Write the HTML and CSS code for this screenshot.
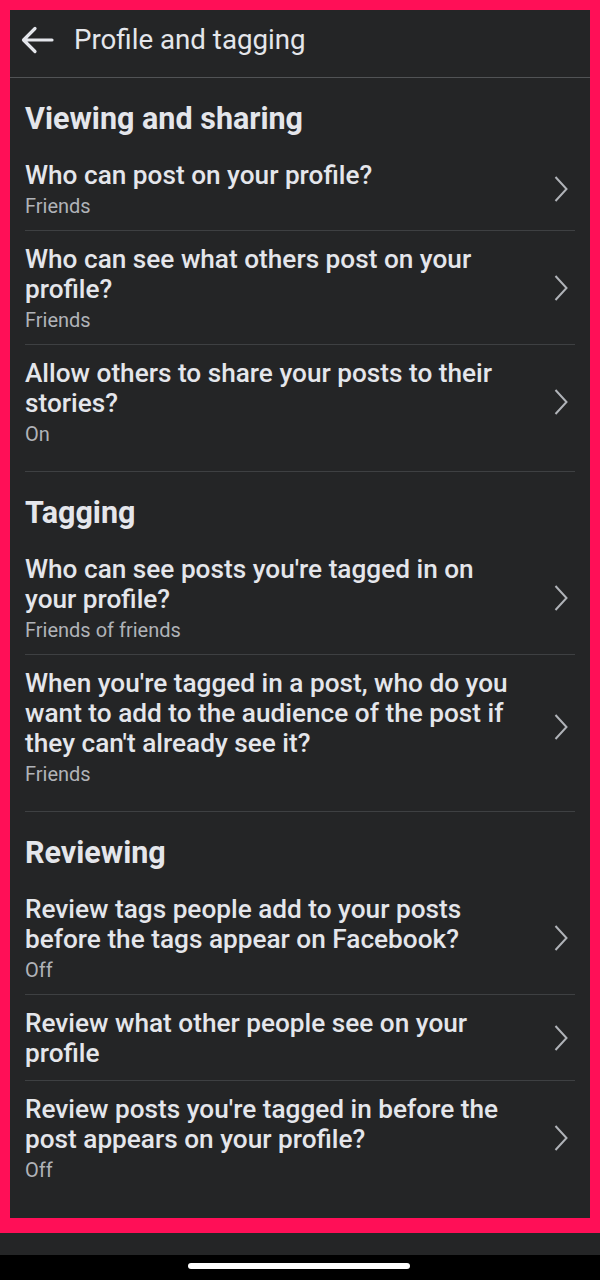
FILE: index.html
```html
<!DOCTYPE html>
<html lang="en">
<head>
<meta charset="utf-8">
<title>Profile and tagging</title>
<link rel="stylesheet" href="styles.css">
</head>
<body>
<div class="frame">
  <div class="app">
    <header class="topbar">
      <svg class="back" width="34" height="30" viewBox="0 0 34 30" aria-hidden="true">
        <path d="M32 15H4M15 3.5L3.5 15L15 26.5" fill="none" stroke="#e4e6eb" stroke-width="3.2" stroke-linecap="round" stroke-linejoin="round"/>
      </svg>
      <h1 class="topbar-title">Profile and tagging</h1>
    </header>

    <section class="section">
      <h2 class="section-title">Viewing and sharing</h2>
      <div class="item">
        <div class="item-text">
          <div class="item-title">Who can post on your profile?</div>
          <div class="item-sub">Friends</div>
        </div>
        <svg class="chev" width="16" height="28" viewBox="0 0 16 28"><path d="M2.5 2L13.5 14L2.5 26" fill="none" stroke="#b0b3b8" stroke-width="2"/></svg>
      </div>
      <div class="item">
        <div class="item-text">
          <div class="item-title">Who can see what others post on your profile?</div>
          <div class="item-sub">Friends</div>
        </div>
        <svg class="chev" width="16" height="28" viewBox="0 0 16 28"><path d="M2.5 2L13.5 14L2.5 26" fill="none" stroke="#b0b3b8" stroke-width="2"/></svg>
      </div>
      <div class="item">
        <div class="item-text">
          <div class="item-title">Allow others to share your posts to their stories?</div>
          <div class="item-sub">On</div>
        </div>
        <svg class="chev" width="16" height="28" viewBox="0 0 16 28"><path d="M2.5 2L13.5 14L2.5 26" fill="none" stroke="#b0b3b8" stroke-width="2"/></svg>
      </div>
    </section>

    <section class="section">
      <h2 class="section-title">Tagging</h2>
      <div class="item">
        <div class="item-text">
          <div class="item-title">Who can see posts you're tagged in on your profile?</div>
          <div class="item-sub">Friends of friends</div>
        </div>
        <svg class="chev" width="16" height="28" viewBox="0 0 16 28"><path d="M2.5 2L13.5 14L2.5 26" fill="none" stroke="#b0b3b8" stroke-width="2"/></svg>
      </div>
      <div class="item">
        <div class="item-text">
          <div class="item-title">When you're tagged in a post, who do you want to add to the audience of the post if they can't already see it?</div>
          <div class="item-sub">Friends</div>
        </div>
        <svg class="chev" width="16" height="28" viewBox="0 0 16 28"><path d="M2.5 2L13.5 14L2.5 26" fill="none" stroke="#b0b3b8" stroke-width="2"/></svg>
      </div>
    </section>

    <section class="section">
      <h2 class="section-title">Reviewing</h2>
      <div class="item">
        <div class="item-text">
          <div class="item-title">Review tags people add to your posts before the tags appear on Facebook?</div>
          <div class="item-sub">Off</div>
        </div>
        <svg class="chev" width="16" height="28" viewBox="0 0 16 28"><path d="M2.5 2L13.5 14L2.5 26" fill="none" stroke="#b0b3b8" stroke-width="2"/></svg>
      </div>
      <div class="item">
        <div class="item-text">
          <div class="item-title">Review what other people see on your profile</div>
        </div>
        <svg class="chev" width="16" height="28" viewBox="0 0 16 28"><path d="M2.5 2L13.5 14L2.5 26" fill="none" stroke="#b0b3b8" stroke-width="2"/></svg>
      </div>
      <div class="item">
        <div class="item-text">
          <div class="item-title">Review posts you're tagged in before the post appears on your profile?</div>
          <div class="item-sub">Off</div>
        </div>
        <svg class="chev" width="16" height="28" viewBox="0 0 16 28"><path d="M2.5 2L13.5 14L2.5 26" fill="none" stroke="#b0b3b8" stroke-width="2"/></svg>
      </div>
    </section>
  </div>
</div>
<div class="navbar"></div>
<div class="homebar"><span class="home-indicator"></span></div>
</body>
</html>
```

FILE: styles.css
```css
* { box-sizing: border-box; }
html, body { margin: 0; padding: 0; }
body {
  width: 600px;
  height: 1280px;
  background: #000;
  font-family: Roboto, "Noto Sans", "Liberation Sans", sans-serif;
  color: #e4e6eb;
  overflow: hidden;
}
.frame {
  height: 1233px;
  background: #ff0f57;
  padding: 10px 10px 15px 10px;
}
.app {
  height: 100%;
  background: #242526;
  display: flex;
  flex-direction: column;
}
.topbar {
  height: 68px;
  border-bottom: 1px solid #515355;
  display: flex;
  align-items: center;
  padding-left: 10px;
  padding-bottom: 8px;
  flex-shrink: 0;
}
.back { display: block; margin-right: 20px; }
.topbar-title {
  margin: 0;
  font-size: 27.7px;
  line-height: 32px;
  font-weight: 400;
  color: #e4e6eb;
}
.section {
  margin: 0 15px;
  padding-top: 24px;
  padding-bottom: 13px;
  border-bottom: 1px solid #3e4042;
}
.section:last-child { border-bottom: none; }
.section-title {
  margin: 0 0 11px 0;
  height: 34px;
  line-height: 34px;
  font-size: 30.5px;
  font-weight: 700;
  color: #e4e6eb;
}
.item {
  display: flex;
  align-items: center;
  padding: 13px 0 12px 0;
  border-bottom: 1px solid #3e4042;
}
.item:last-child { border-bottom: none; }
.item-text { flex: 1; min-width: 0; padding-right: 36px; }
.item-title {
  font-size: 26.2px;
  line-height: 30px;
  font-weight: 500;
  color: #e4e6eb;
}
.item-sub {
  margin-top: 4px;
  font-size: 20px;
  line-height: 24px;
  color: #b0b3b8;
}
.chev { display: block; flex-shrink: 0; margin-right: 6px; }
.navbar {
  height: 22px;
  background: #242526;
}
.homebar {
  height: 25px;
  background: #000;
  display: flex;
  justify-content: center;
  padding-top: 8px;
}
.home-indicator {
  display: block;
  width: 222px;
  height: 6px;
  border-radius: 3px;
  background: #fff;
  margin-left: -3px;
}
```
